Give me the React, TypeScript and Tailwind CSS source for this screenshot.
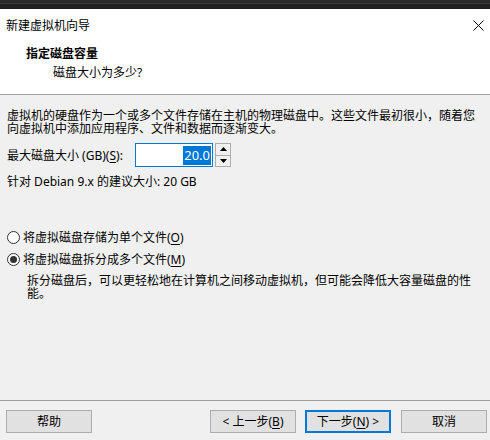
import React from "react";

const FONT = {
  fontFamily: '"Noto Sans", "Noto Sans CJK SC", sans-serif',
};

const Underline: React.FC<{ k: string }> = ({ k }) => (
  <span className="underline underline-offset-2">{k}</span>
);

const WizardDialog: React.FC = () => {
  return (
    <div
      className="w-[490px] h-[440px] flex flex-col bg-[#f0f0f0] text-[12px] leading-[13px] text-black overflow-hidden"
      style={FONT}
    >
      {/* window behind */}
      <div className="h-[9px] bg-[#1f1f1f] border-t-[3px] border-[#2a2a2a] shrink-0">
        <div className="h-px bg-[#3c3c3c]" />
      </div>

      {/* header */}
      <div className="h-[86px] bg-white border-b border-[#a0a0a0] shrink-0 flex flex-col">
        <div className="flex items-center justify-between pl-[6px] pr-[6px] h-[30px] pt-[2px]">
          <span>新建虚拟机向导</span>
          <svg width="11" height="11" viewBox="0 0 11 11">
            <path d="M0.5 0.5 L10.5 10.5 M10.5 0.5 L0.5 10.5" stroke="#000" strokeWidth="1" />
          </svg>
        </div>
        <div className="pl-[26px] pt-[8px] font-bold">指定磁盘容量</div>
        <div className="pl-[53px] pt-[6px]">磁盘大小为多少?</div>
      </div>

      {/* body */}
      <div className="flex-1 flex flex-col px-[7px]">
        <p className="mt-[14px]">
          虚拟机的硬盘作为一个或多个文件存储在主机的物理磁盘中。这些文件最初很小，随着您
          <br />
          向虚拟机中添加应用程序、文件和数据而逐渐变大。
        </p>

        <div className="flex items-center mt-[8px] h-[24px]">
          <span className="w-[128px]">
            最大磁盘大小 (GB)(<Underline k="S" />):
          </span>
          <div className="w-[78px] h-[24px] border border-[#0078d7] bg-white flex items-center justify-end pr-[1px]">
            <span className="bg-[#0078d7] text-white px-[1px] h-[19px] flex items-center text-[13px]">
              20.0
            </span>
          </div>
          <div className="ml-[2px] w-[16px] h-[24px] border border-[#adadad] bg-[#f0f0f0] flex flex-col">
            <div className="flex-1 flex items-center justify-center border-b border-[#adadad]">
              <svg width="7" height="4" viewBox="0 0 7 4">
                <path d="M3.5 0 L7 4 L0 4 Z" fill="#000" />
              </svg>
            </div>
            <div className="flex-1 flex items-center justify-center">
              <svg width="7" height="4" viewBox="0 0 7 4">
                <path d="M0 0 L7 0 L3.5 4 Z" fill="#000" />
              </svg>
            </div>
          </div>
        </div>

        <p className="mt-[8px]">针对 Debian 9.x 的建议大小: 20 GB</p>

        <div className="mt-[43px] flex flex-col gap-[9px]">
          <label className="flex items-center gap-[3px]">
            <span className="w-[13px] h-[13px] rounded-full border border-[#333] bg-white" />
            <span>
              将虚拟磁盘存储为单个文件(<Underline k="O" />)
            </span>
          </label>
          <label className="flex items-center gap-[3px]">
            <span className="w-[13px] h-[13px] rounded-full border border-[#333] bg-white flex items-center justify-center">
              <span className="w-[7px] h-[7px] rounded-full bg-[#333]" />
            </span>
            <span>
              将虚拟磁盘拆分成多个文件(<Underline k="M" />)
            </span>
          </label>
        </div>

        <p className="pl-[20px] mt-[8px]">
          拆分磁盘后，可以更轻松地在计算机之间移动虚拟机，但可能会降低大容量磁盘的性
          <br />
          能。
        </p>
      </div>

      {/* footer */}
      <div className="h-[40px] border-t border-[#a0a0a0] shrink-0 flex items-start pt-[9px] pl-[6px] pr-[3px]">
        <button className="w-[86px] h-[23px] bg-[#e1e1e1] border border-[#adadad]">帮助</button>
        <div className="flex-1" />
        <button className="w-[86px] h-[23px] bg-[#e1e1e1] border border-[#adadad]">
          &lt; 上一步(<Underline k="B" />)
        </button>
        <button className="ml-[9px] w-[86px] h-[23px] bg-[#e1e1e1] border-2 border-[#0078d7]">
          下一步(<Underline k="N" />) &gt;
        </button>
        <button className="ml-[10px] w-[86px] h-[23px] bg-[#e1e1e1] border border-[#adadad]">取消</button>
      </div>
    </div>
  );
};

export default function App() {
  return <WizardDialog />;
}
